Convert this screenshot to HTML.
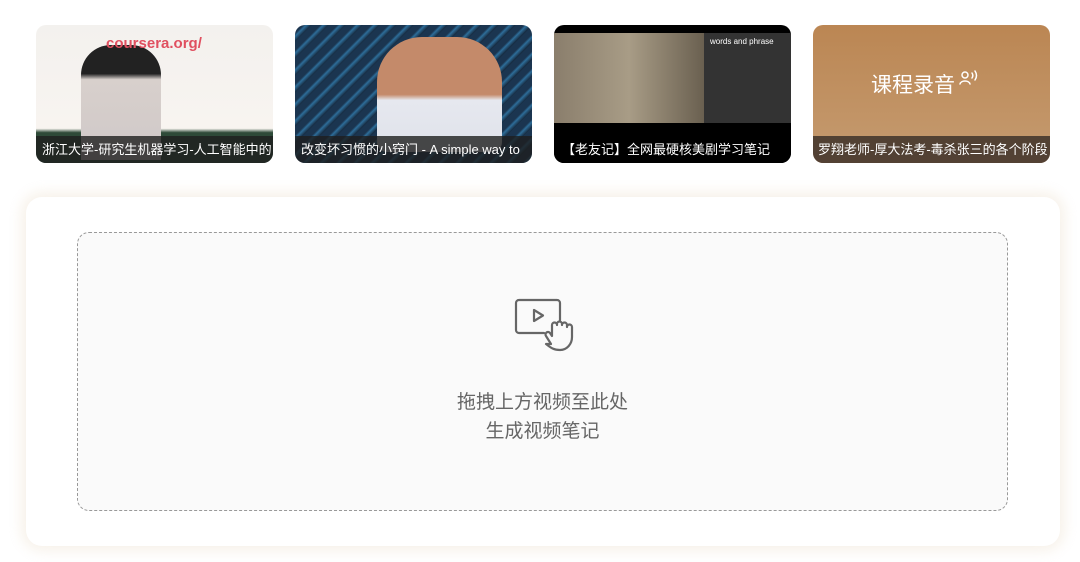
<!DOCTYPE html>
<html><head><meta charset="utf-8"><style>
body{margin:0;width:1080px;height:562px;background:#fff;font-family:"Liberation Sans","Noto Sans CJK SC",sans-serif;position:relative;overflow:hidden}
.card{position:absolute;top:25px;width:237px;height:138px;border-radius:10px;overflow:hidden}
.cap{position:absolute;left:0;right:0;bottom:0;height:27px;background:rgba(30,30,30,.8);color:#fff;font-size:13px;line-height:27px;padding-left:6px;white-space:nowrap;overflow:hidden}
.panel{position:absolute;left:26px;top:197px;width:1034px;height:349px;background:#fff;border-radius:16px;box-shadow:0 0 14px 4px rgba(240,230,215,.6)}
.drop{position:absolute;left:51px;top:35px;width:929px;height:277px;border:1px dashed #999;border-radius:12px;background:#fafafa}
.txt{position:absolute;left:0;right:0;top:155px;text-align:center;color:#666;font-size:19px;line-height:29px}
</style></head><body>
<div class="card" style="left:36px;background:linear-gradient(180deg,#f3f1ee 0,#f8f4f0 75%,#2e4a38 78%,#2e4a38 100%)">
<div style="position:absolute;left:45px;top:20px;width:80px;height:115px;background:linear-gradient(#222 0,#222 25%,#d8d0cc 30%,#cfc8c8 100%);border-radius:30px 30px 0 0"></div>
<div style="position:absolute;left:70px;top:10px;color:#e05060;font-size:15px;font-weight:bold;white-space:nowrap">coursera.org/</div>
<div class="cap">浙江大学-研究生机器学习-人工智能中的</div></div>
<div class="card" style="left:295px;background:repeating-linear-gradient(135deg,#1b3550 0,#1b3550 6px,#2e6e9a 8px,#16283c 12px)">
<div style="position:absolute;left:82px;top:12px;width:125px;height:115px;background:linear-gradient(#c48a6a 0,#c48a6a 50%,#e6e8ef 55%,#dfe2ea 100%);border-radius:45px 45px 10px 10px"></div>
<div class="cap">改变坏习惯的小窍门 - A simple way to</div></div>
<div class="card" style="left:554px;background:#000">
<div style="position:absolute;left:0;top:8px;width:150px;height:90px;background:linear-gradient(90deg,#8a7e6c,#a89c86 50%,#6a6050)"></div>
<div style="position:absolute;left:150px;top:8px;width:87px;height:90px;background:#333;color:#fff;font-size:8px;padding:4px 6px;box-sizing:border-box">words and phrase</div>
<div class="cap" style="background:#000;padding-left:8px">【老友记】全网最硬核美剧学习笔记</div></div>
<div class="card" style="left:813px;background:linear-gradient(180deg,#bb8653,#c59b70)">
<div style="position:absolute;left:58px;top:44px;color:#fff;font-size:21px">课程录音</div>
<svg style="position:absolute;left:146px;top:45px" width="20" height="16" viewBox="0 0 20 16" fill="none" stroke="#fff" stroke-width="1.5" stroke-linecap="round"><circle cx="6" cy="5" r="3"/><path d="M1 14c1-4 9-4 10 0"/><path d="M13 3c1 1.5 1 3.5 0 5"/><path d="M16 1c2 3 2 6 0 9"/></svg>
<div class="cap" style="background:rgba(70,55,45,.9);padding-left:5px">罗翔老师-厚大法考-毒杀张三的各个阶段</div></div>
<div class="panel"><div class="drop">
<svg style="position:absolute;left:436px;top:65px" width="62" height="56" viewBox="0 0 62 56" fill="none" stroke="#666" stroke-width="2.2" stroke-linecap="round" stroke-linejoin="round">
<path d="M30 35H5a3 3 0 0 1-3-3V5a3 3 0 0 1 3-3h38a3 3 0 0 1 3 3v17"/>
<path d="M20 12v11l9-5.5z"/>
<path d="M37 46l-5-8a2.5 2.5 0 0 1 4-3l2 3V27a2.5 2.5 0 0 1 5 0v-1a2.5 2.5 0 0 1 5 0v1a2.5 2.5 0 0 1 5 0v2a2.5 2.5 0 0 1 5 0v10c0 7-5 13-12 13s-10-3-14-6z" fill="#fafafa"/>
</svg>
<div class="txt">拖拽上方视频至此处<br>生成视频笔记</div>
</div></div>
</body></html>
